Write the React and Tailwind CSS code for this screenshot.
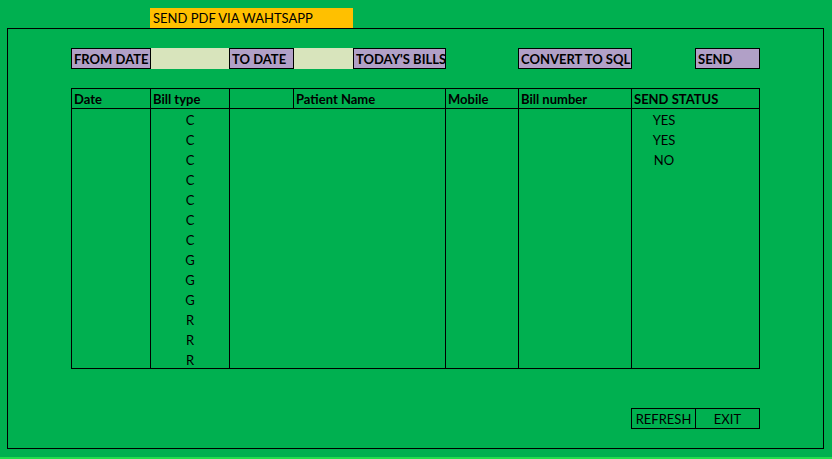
const billTypes = ["C", "C", "C", "C", "C", "C", "C", "G", "G", "G", "R", "R", "R"];
const statuses = ["YES", "YES", "NO"];

const PurpleBtn = ({ label, w }) => (
  <div className={`${w} shrink-0 h-[21px] border border-black bg-[#b1a0c7] pl-[2px] pt-[1px] font-bold leading-[19px] text-black whitespace-nowrap overflow-hidden`}>
    {label}
  </div>
);

export default function App() {
  return (
    <div
      className="w-[832px] h-[459px] bg-[#00b050] text-[13px] text-black flex flex-col overflow-hidden"
      style={{ fontFamily: "Lato, 'Open Sans', sans-serif" }}
    >
      {/* title */}
      <div className="h-[28px] pt-[8px] pl-[150px]">
        <div className="w-[203px] h-[20px] bg-[#ffc000] pl-[3px] pt-[1px] leading-[19px]">SEND PDF VIA WAHTSAPP</div>
      </div>

      {/* main frame */}
      <div className="ml-[7px] w-[817px] h-[421px] border border-black flex flex-col items-start">
        {/* toolbar */}
        <div className="mt-[19px] pl-[63px] flex items-center">
          <PurpleBtn label="FROM DATE" w="w-[80px]" />
          <div className="w-[78px] shrink-0 h-[21px] bg-[#d8e4bc]" />
          <PurpleBtn label="TO DATE" w="w-[65px]" />
          <div className="w-[59px] shrink-0 h-[21px] bg-[#d8e4bc]" />
          <PurpleBtn label="TODAY'S BILLS" w="w-[93px]" />
          <div className="w-[72px] shrink-0" />
          <PurpleBtn label="CONVERT TO SQL" w="w-[114px]" />
          <div className="w-[63px] shrink-0" />
          <PurpleBtn label="SEND" w="w-[65px]" />
        </div>

        {/* table */}
        <div className="mt-[19px] ml-[63px] flex flex-col w-[689px]">
          <div className="flex h-[21px] border-t border-b border-black font-bold leading-[19px]">
            <div className="w-[79px] shrink-0 border-l border-black pl-[2px] pt-[1px]">Date</div>
            <div className="w-[79px] shrink-0 border-l border-black pl-[2px] pt-[1px]">Bill type</div>
            <div className="w-[64px] shrink-0 border-l border-black" />
            <div className="w-[152px] shrink-0 border-l border-black pl-[2px] pt-[1px]">Patient Name</div>
            <div className="w-[73px] shrink-0 border-l border-black pl-[2px] pt-[1px]">Mobile</div>
            <div className="w-[113px] shrink-0 border-l border-black pl-[2px] pt-[1px]">Bill number</div>
            <div className="w-[129px] shrink-0 border-l border-r border-black pl-[2px] pt-[1px]">SEND STATUS</div>
          </div>
          <div className="flex h-[260px] border-b border-black leading-[20px]">
            <div className="w-[79px] shrink-0 border-l border-black" />
            <div className="w-[79px] shrink-0 border-l border-black flex flex-col pt-[1px]">
              {billTypes.map((b, i) => (
                <div key={i} className="h-[20px] shrink-0 text-center">{b}</div>
              ))}
            </div>
            <div className="w-[216px] shrink-0 border-l border-black" />
            <div className="w-[73px] shrink-0 border-l border-black" />
            <div className="w-[113px] shrink-0 border-l border-black" />
            <div className="w-[129px] shrink-0 border-l border-r border-black flex flex-col pt-[1px]">
              {statuses.map((s, i) => (
                <div key={i} className="w-[64px] h-[20px] text-center">{s}</div>
              ))}
            </div>
          </div>
        </div>

        {/* footer buttons */}
        <div className="mt-[39px] ml-[623px] flex h-[21px] leading-[19px]">
          <div className="w-[65px] border border-black text-center pt-[1px]">REFRESH</div>
          <div className="w-[64px] border-t border-r border-b border-black text-center pt-[1px]">EXIT</div>
        </div>
      </div>

      <div className="mt-[8px] h-[2px] bg-[#22dd4c]" />
    </div>
  );
}
